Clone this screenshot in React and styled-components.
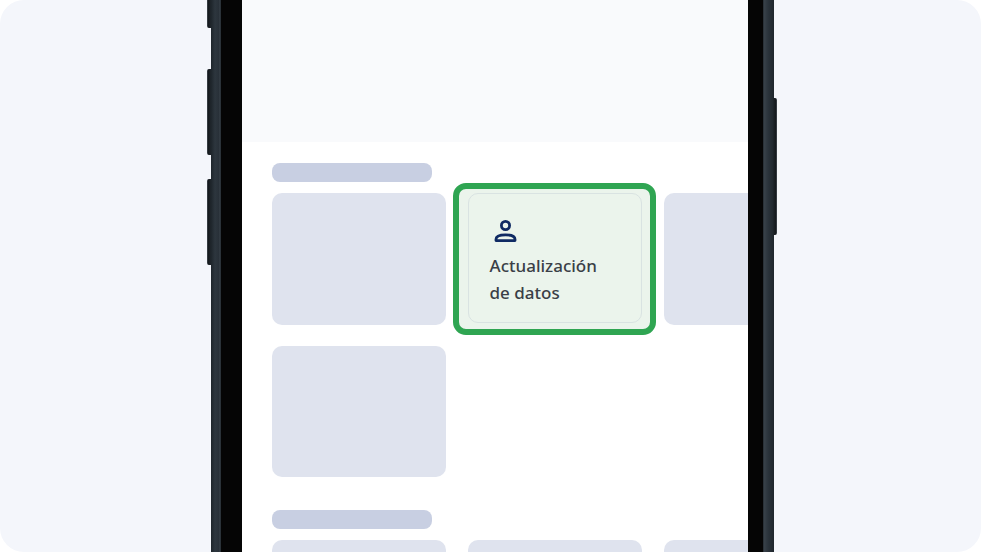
import React from 'react';
import styled, { createGlobalStyle } from 'styled-components';

const Global = createGlobalStyle`
  html, body { margin: 0; padding: 0; background: #fff; }
  body { font-family: "Noto Sans", "Liberation Sans", sans-serif; }
`;

const Panel = styled.main`
  width: 981px;
  height: 552px;
  border-radius: 24px;
  background: #f4f6fb;
  overflow: hidden;
  display: flex;
  justify-content: flex-start;
  padding-left: 211px;
  box-sizing: border-box;
`;

const Phone = styled.div`
  position: relative;
  width: 563px;
  height: 552px;
  flex: none;
  box-sizing: border-box;
  padding: 0 11px 0 10px;
  background: linear-gradient(
    90deg,
    #1e252b 0,
    #2d363e 4px,
    #283038 8px,
    #3a434b 9px,
    #1b2126 10px,
    #1b2126 552px,
    #39424a 553px,
    #2b343c 557px,
    #1f262c 563px
  );
`;

const Bezel = styled.div`
  height: 100%;
  box-sizing: border-box;
  padding: 0 15px 0 21px;
  background: #050505;
`;

const Screen = styled.div`
  height: 100%;
  background: #fff;
  overflow: hidden;
  display: flex;
  flex-direction: column;
`;

const Hero = styled.div`
  height: 142px;
  flex: none;
  background: #f9fafc;
`;

const Section = styled.section`
  padding: ${p => p.$top}px 0 0 30px;
  display: flex;
  flex-direction: column;
  gap: 11px;
`;

const TitleBar = styled.div`
  width: 160px;
  height: 19px;
  border-radius: 8px;
  background: #c8cfe2;
`;

const Grid = styled.div`
  display: grid;
  grid-template-columns: repeat(3, 174px);
  gap: 21px 22px;
`;

const Card = styled.div`
  position: relative;
  height: ${p => p.$h}px;
  border-radius: 10px;
  background: #dfe3ee;
`;

const SideButton = styled.div`
  position: absolute;
  top: ${p => p.$top}px;
  ${p => (p.$right ? 'right: -3px;' : 'left: -4px;')}
  width: 4px;
  height: ${p => p.$h}px;
  border-radius: ${p => (p.$right ? '0 2px 2px 0' : '2px 0 0 2px')};
  background: ${p => (p.$right
    ? 'linear-gradient(90deg, #20272d, #14181c 70%, #4a525a)'
    : 'linear-gradient(90deg, #4a525a, #14181c 30%, #20272d)')};
`;

const Highlight = styled.div`
  position: absolute;
  left: -15px;
  top: -10px;
  width: 203px;
  height: 152px;
  box-sizing: border-box;
  border: 6px solid #2fa552;
  border-radius: 13px;
  background: #ebf4ec;
  padding: 4px 8px 6px 9px;
`;

const ActionCard = styled.div`
  height: 100%;
  box-sizing: border-box;
  border: 1.5px solid #d9e3e2;
  border-radius: 10px;
  padding: 24px 20px 0 20.5px;
`;

const IconWrap = styled.div`
  height: 24px;
  margin-left: 3.5px;
  color: #0f2a63;
  display: flex;
`;

const Label = styled.div`
  margin-top: 10px;
  font-size: 17px;
  font-weight: 500;
  line-height: 27px;
  color: #3a3f47;
`;

const PersonIcon = () => (
  <svg width="24" height="24" viewBox="0 0 24 24" fill="none" stroke="currentColor" strokeWidth="2.8">
    <circle cx="12.5" cy="7.5" r="4.1" />
    <path d="M3 22.6v-1.4c0-3 3.8-4.3 9.5-4.3s9.5 1.3 9.5 4.3v1.4z" strokeLinejoin="round" />
  </svg>
);

export default function App() {
  return (
    <>
      <Global />
      <Panel>
        <Phone>
          <SideButton $top={-10} $h={38} />
          <SideButton $top={69} $h={86} />
          <SideButton $top={179} $h={86} />
          <SideButton $right $top={98} $h={137} />
          <Bezel>
            <Screen>
              <Hero />
              <Section $top={21}>
                <TitleBar />
                <Grid>
                  <Card $h={132} />
                  <Card $h={132}>
                    <Highlight>
                      <ActionCard>
                        <IconWrap><PersonIcon /></IconWrap>
                        <Label>Actualización<br />de datos</Label>
                      </ActionCard>
                    </Highlight>
                  </Card>
                  <Card $h={132} />
                  <Card $h={131} />
                </Grid>
              </Section>
              <Section $top={33}>
                <TitleBar />
                <Grid>
                  <Card $h={132} />
                  <Card $h={132} />
                  <Card $h={132} />
                </Grid>
              </Section>
            </Screen>
          </Bezel>
        </Phone>
      </Panel>
    </>
  );
}
